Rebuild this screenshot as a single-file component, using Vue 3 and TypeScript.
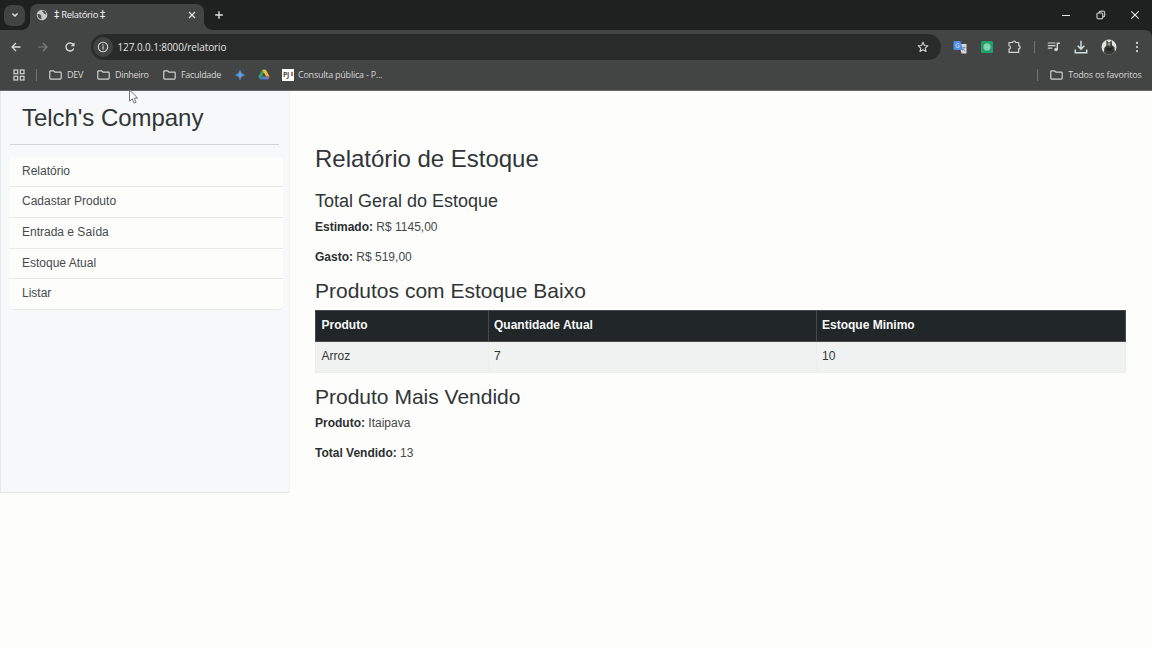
<script setup lang="ts">
interface Bookmark { label: string; cls: string }

const folders: Bookmark[] = [
  { label: 'DEV', cls: 'dev' },
  { label: 'Dinheiro', cls: 'money' },
  { label: 'Faculdade', cls: 'college' },
]
const links: string[] = ['Relatório', 'Cadastar Produto', 'Entrada e Saída', 'Estoque Atual', 'Listar']
const columns: string[] = ['Produto', 'Quantidade Atual', 'Estoque Minimo']
const lowStock: string[][] = [['Arroz', '7', '10']]
</script>

<template>
  <div class="window">
    <header class="chrome">
      <div class="tabstrip">
        <button class="tabsearch"><svg width="8" height="6" viewBox="0 0 8 6"><path d="M1.4 1.4 4 4l2.6-2.6" fill="none" stroke="#e3e3e3" stroke-width="1.4" /></svg></button>
        <div class="tab">
          <svg class="globe" width="12" height="12" viewBox="0 0 12 12"><circle cx="6" cy="6" r="5.3" fill="#c6c9c9" /><path d="M1.500 5.200c1.600-.4 2.800.2 3.600 1.300.5.8 0 1.400.2 2.200l.3 1.500C3.200 9.900 1.400 8.200 1.500 5.200zM6.300 1.500c-.4 1 .2 1.500 1 1.800.8.400.2 1.500 1.200 1.800l1.800.2C10.400 3.300 8.700 1.400 6.300 1.500z" fill="#4d4f4f" /></svg>
          <span class="tabtitle"><span class="dagger">‡</span> Relatório <span class="dagger">‡</span></span>
          <svg class="close" width="8" height="8" viewBox="0 0 8 8"><path d="m1 1 6 6M7 1 1 7" stroke="#e3e3e3" stroke-width="1.3" /></svg>
        </div>
        <svg class="newtab" width="10" height="10" viewBox="0 0 10 10"><path d="M5 1.200v7.600M1.200 5h7.600" stroke="#dedede" stroke-width="1.400" /></svg>
        <div class="controls">
          <svg width="10" height="10" viewBox="0 0 10 10"><path d="M1 5.500h8" stroke="#e8e8e8" /></svg>
          <svg width="10" height="10" viewBox="0 0 10 10" fill="none" stroke="#e8e8e8"><rect x="1" y="3" width="5.800" height="5.800" rx=".8" /><path d="M3.200 2.800V2q0-.8.8-.8h3.700q1 0 1 1v3.700q0 .8-.8.800H7" /></svg>
          <svg width="10" height="10" viewBox="0 0 10 10"><path d="m1.300 1.300 7.400 7.400m0-7.400L1.300 8.700" stroke="#e8e8e8" stroke-width="1.100" /></svg>
        </div>
      </div>

      <div class="toolbar">
        <div class="nav">
          <svg width="12" height="12" viewBox="0 0 12 12"><path d="M10.500 6H2M6 2 2 6l4 4" fill="none" stroke="#d8d8d8" stroke-width="1.300" /></svg>
          <svg width="12" height="12" viewBox="0 0 12 12"><path d="M1.500 6H10M6 2l4 4-4 4" fill="none" stroke="#808282" stroke-width="1.200" /></svg>
          <svg width="12" height="12" viewBox="0 0 12 12"><path d="M9.700 7.500A4 4 0 1 1 9 3.300L10 4.400" fill="none" stroke="#d8d8d8" stroke-width="1.400" /><path d="M10.500 1.200v4H6.600z" fill="#d8d8d8" /></svg>
        </div>
        <div class="address">
          <span class="info"><svg width="12" height="12" viewBox="0 0 12 12"><circle cx="6" cy="6" r="4.700" fill="none" stroke="#d4d6d6" stroke-width="1.100" /><path d="M6 5.300v3.200M6 3.300v1.200" stroke="#d4d6d6" stroke-width="1.200" /></svg></span>
          <span class="url">127.0.0.1:8000/relatorio</span>
          <svg class="star" width="12" height="12" viewBox="0 0 12 12"><path d="m6 1.300 1.400 3.200 3.400.3-2.600 2.300.8 3.400L6 8.700l-3 1.800.8-3.400-2.600-2.300 3.400-.3z" fill="none" stroke="#d3d5d5" stroke-width="1.100" stroke-linejoin="round" /></svg>
        </div>
        <div class="actions">
          <svg width="14" height="14" viewBox="0 0 14 14"><path d="M6 4h7.500v9.500H8.500z" fill="#d5d7da" /><path d="M9.300 7.500h3.400M11 6.500v1c0 1.500-.8 2.800-1.500 3.300M9.700 8.500c.5 1 1.300 1.800 2.500 2.300" fill="none" stroke="#818589" stroke-width=".8" /><path d="M1.500 1h6L10 10H2Q.500 10 .5 8.500V2q0-1 1-1z" fill="#528fe3" /><path d="M6.300 4.200a2 2 0 1 0 .1 2.600V5.900H4.800" fill="none" stroke="#bed8fb" stroke-width=".9" /></svg>
          <svg width="14" height="14" viewBox="0 0 14 14"><rect x="1" y="1" width="12" height="12" rx="1.500" fill="#20a16c" /><circle cx="7" cy="7" r="3.700" fill="#75c8a4" /><path d="M5 5.400 7 4l2.200 1.400v2.800L7 9.700 5 8.300zM5 5.500l4 2.700M9.200 5.500 5 8.200" fill="none" stroke="#a1ddc2" stroke-width=".7" /></svg>
          <svg width="14" height="14" viewBox="0 0 14 14"><path d="M2 2.500h3.700a1.500 1.500 0 0 1 3 0h3v3.200a1.500 1.500 0 0 1 0 3v3.600H2V9.200c2-.3 2-3.200 0-3.500z" fill="none" stroke="#d1d3d3" stroke-width="1.200" stroke-linejoin="round" /></svg>
          <i class="divider"></i>
          <svg class="queue" width="14" height="14" viewBox="0 0 14 14"><path d="M.8 3h7.700M.8 5.600h7.700M.8 8.200h4.500" stroke="#d1d3d3" stroke-width="1.200" /><path d="M10.300 9.500V3.300h2.600" fill="none" stroke="#d1d3d3" stroke-width="1.400" /><circle cx="9" cy="9.500" r="1.800" fill="#d1d3d3" /></svg>
          <svg width="14" height="14" viewBox="0 0 14 14"><path d="M7 .8v8M3.700 5.800 7 9.100l3.300-3.300M1.300 9.500v3.200h11.400V9.500" fill="none" stroke="#d0dcdf" stroke-width="1.500" /></svg>
          <svg width="16" height="16" viewBox="0 0 16 16"><circle cx="8" cy="8" r="7.500" fill="#e3e2df" /><path d="M5.500 1 7.300 3h1.800L10.500 1l.6 5.200 2.400 2 .3 4.600A7.500 7.500 0 0 1 3 13.500L3.300 9l2-2.300z" fill="#353935" /><path d="M6.800 3.200h2.600v3.500H6.500z" fill="#8d8d86" /><path d="m4.500 8.400 3.500.8 3.700-.8-1.600 3H6.200z" fill="#20251f" /></svg>
          <svg width="14" height="14" viewBox="0 0 14 14" fill="#d8dada"><circle cx="7" cy="2.900" r="1.100" /><circle cx="7" cy="7" r="1.100" /><circle cx="7" cy="11.100" r="1.100" /></svg>
        </div>
      </div>

      <div class="bookmarks">
        <svg class="grid" width="12" height="12" viewBox="0 0 12 12" fill="none" stroke="#d2d4d4" stroke-width="1.200"><rect x="1" y="1" width="3.700" height="3.700" /><rect x="7.300" y="1" width="3.700" height="3.700" /><rect x="1" y="7.300" width="3.700" height="3.700" /><rect x="7.300" y="7.300" width="3.700" height="3.700" /></svg>
        <i class="divider"></i>
        <div v-for="f in folders" :key="f.label" class="folder" :class="f.cls">
          <svg width="13" height="10" viewBox="0 0 13 10"><path d="M1.600.8h3L6 2.200h5.400q.8 0 .8.800v5.300q0 .8-.8.800H1.600q-.8 0-.8-.8V1.600q0-.8.8-.8z" fill="none" stroke="#cfd1d1" stroke-width="1.200" /></svg>
          <span>{{ f.label }}</span>
        </div>
        <svg class="gem" width="10" height="10" viewBox="0 0 10 10"><path d="M5 .3Q5.600 4.400 9.700 5 5.600 5.600 5 9.700 4.400 5.600.3 5 4.400 4.400 5 .3z" fill="#5e9fe4" stroke="#5e9fe4" stroke-width=".5" /></svg>
        <svg class="drive" width="12" height="11" viewBox="0 0 12 11"><path d="M4.200.8h3.600L4 7.200 2 10.400.4 7.600z" fill="#36a463" /><path d="M4.200.8h3.600l3.800 6.800H8z" fill="#edbb35" /><path d="M4 7.300h7.600L10 10.400H2z" fill="#477fd8" /><path d="M8.200 7.300h3.400L10 10.400z" fill="#dc6846" /><path d="M6 4.200 4.200 7.300h3.600z" fill="#474949" /></svg>
        <span class="favicon"><b>PJ</b><i></i></span>
        <span class="consulta">Consulta pública - P...</span>
        <div class="allfav">
          <i class="divider"></i>
          <svg width="13" height="10" viewBox="0 0 13 10"><path d="M1.600.8h3L6 2.200h5.400q.8 0 .8.800v5.300q0 .8-.8.800H1.600q-.8 0-.8-.8V1.600q0-.8.8-.8z" fill="none" stroke="#cfd1d1" stroke-width="1.200" /></svg>
          <span>Todos os favoritos</span>
        </div>
      </div>
    </header>

    <div class="page">
      <aside class="sidebar">
        <h2>Telch's Company</h2>
        <hr />
        <ul>
          <li v-for="l in links" :key="l"><a>{{ l }}</a></li>
        </ul>
      </aside>
      <main>
        <h2>Relatório de Estoque</h2>
        <h4>Total Geral do Estoque</h4>
        <p><strong>Estimado:</strong> R$ 1145,00</p>
        <p><strong>Gasto:</strong> R$ 519,00</p>
        <h3>Produtos com Estoque Baixo</h3>
        <table>
          <colgroup><col class="c1" /><col class="c2" /><col /></colgroup>
          <thead><tr><th v-for="c in columns" :key="c">{{ c }}</th></tr></thead>
          <tbody><tr v-for="r in lowStock" :key="r[0]"><td v-for="v in r" :key="v">{{ v }}</td></tr></tbody>
        </table>
        <h3 class="best">Produto Mais Vendido</h3>
        <p><strong>Produto:</strong> Itaipava</p>
        <p><strong>Total Vendido:</strong> 13</p>
      </main>
    </div>
    <svg class="cursor" width="11" height="16" viewBox="0 0 11 16"><path d="M1.500 1v11.200l2.700-2.300 1.900 4.200 2-.9-1.900-4.100h3.500z" fill="#fff" stroke="#727476" stroke-width="1" /></svg>
  </div>
</template>

<style>
body { margin: 0; background: #fdfdfc; }
</style>

<style scoped>
* { box-sizing: border-box; }
svg { display: block; flex: none; }
.window { position: relative; width: 1152px; height: 648px; overflow: hidden; background: #fdfdfc; font-family: "Liberation Sans", Arial, sans-serif; color: #303637; }
.chrome { height: 91px; background: #434444; font-family: "Open Sans", "Noto Sans", sans-serif; color: #dedfdf; font-size: 9.500px; border-bottom: 1px solid #6b6867; }
.tabstrip { height: 30px; display: flex; align-items: center; background: #1f2121; }
.tabsearch { width: 21px; height: 21px; margin-left: 4px; padding: 0; border: 0; border-radius: 7px; background: #414343; display: flex; align-items: center; justify-content: center; }
.tab { position: relative; width: 174px; height: 26px; margin: 4px 0 0 5px; padding: 0 8px 4px 6px; display: flex; align-items: center; background: #434444; border-radius: 8px 8px 0 0; }
.tab::before, .tab::after { content: ""; position: absolute; bottom: 0; width: 8px; height: 8px; }
.tab::before { left: -8px; background: radial-gradient(circle at 0 0, transparent 7.500px, #434444 8px); }
.tab::after { right: -8px; background: radial-gradient(circle at 100% 0, transparent 7.500px, #434444 8px); }
.tabtitle { margin-left: 6px; letter-spacing: -.37px; line-height: 14px; white-space: nowrap; color: #eee; font-weight: 500; }
.dagger { font-family: "DejaVu Sans", sans-serif; font-size: 10.500px; line-height: 10px; letter-spacing: 0; }
.close { margin-left: auto; }
.newtab { margin-left: 10px; }
.controls { display: flex; gap: 24.500px; margin-left: auto; margin-right: 12px; }
.toolbar { height: 34px; display: flex; align-items: center; border-radius: 0 7px 0 0; background: #434444; box-shadow: 8px -8px 0 #1f2121; clip-path: inset(0); }
.nav { display: flex; gap: 15px; margin-left: 10px; }
.address { width: 850px; height: 26px; margin-left: 15px; display: flex; align-items: center; border-radius: 13px; background: #292b2b; padding: 0 12px 0 2px; }
.info { width: 20px; height: 20px; border-radius: 50%; background: #414343; display: flex; align-items: center; justify-content: center; }
.url { margin-left: 4.500px; font-size: 10px; letter-spacing: -.1px; color: #e3e4e4; }
.star { margin-left: auto; }
.actions { display: flex; align-items: center; gap: 13px; margin-left: 12px; }
.divider { display: block; width: 1px; height: 12px; background: #717373; flex: none; }
.actions .divider { margin: 0 -1px 0 0; }
.bookmarks { height: 26px; padding-bottom: 5px; display: flex; align-items: center; padding-left: 13px; white-space: nowrap; font-size: 9px; color: #d5d7d7; }
.bookmarks > .divider { margin: 0 12px 0 11px; }
.folder, .allfav { display: flex; align-items: center; gap: 5px; letter-spacing: -.32px; }
.dev { width: 48px; }
.money { width: 66px; }
.college { width: 72px; }
.drive { margin-left: 13px; }
.favicon { margin-left: 12px; width: 12px; height: 12px; background: #fff; color: #4b4c4c; font-size: 7px; line-height: 11px; display: flex; letter-spacing: -.4px; padding: 0 1px; }
.favicon i { width: 2px; height: 4px; margin: 3px 0 0 auto; background: #cf6d4a; }
.consulta { margin-left: 4px; letter-spacing: -.24px; }
.allfav { margin-left: auto; margin-right: 10.500px; letter-spacing: -.2px; }
.allfav .divider { margin-right: 7px; }
.page { display: flex; align-items: flex-start; }
.sidebar { width: 290px; height: 402px; padding: 12px 6px 0 9px; background: #f7f8f9; border: 1px solid #e4e8e9; border-top: 0; border-right-color: #f3f5f5; }
h2, h3, h4, p, ul { margin: 0; font-weight: 400; }
h2 { font-size: 24px; line-height: 29px; letter-spacing: -.02px; }
.sidebar h2 { padding-left: 12px; letter-spacing: -.04px; }
hr { height: 1px; border: 0; background: #d2d5d4; margin: 12px 4px 12px 0; }
ul { padding: 0; list-style: none; }
li { height: 30.750px; padding: 5px 12px 0; border-bottom: 1px solid #e8eaea; background: #fdfdfc; font-size: 12px; line-height: 18px; color: #464b4c; }
li:first-child { border-radius: 4px 4px 0 0; height: 30px; }
li:last-child { border-radius: 0 0 4px 4px; }
main { width: 811px; margin-left: 25px; padding-top: 53px; font-size: 12px; line-height: 18px; color: #44494a; }
h4 { font-size: 18px; line-height: 22px; margin: 17px 0 6px; }
h3 { font-size: 21px; line-height: 25px; margin-bottom: 7px; }
.best { margin-bottom: 5px; }
main h2, h3, h4 { color: #303637; }
p { margin-bottom: 12px; }
strong { color: #2b3031; }
table { width: 811px; border-collapse: collapse; table-layout: fixed; margin-bottom: 11px; }
.c1 { width: 172.500px; }
.c2 { width: 328px; }
th, td { height: 31px; padding: 0 6px 2px 5.500px; text-align: left; color: #303637; }
th { background: #212628; color: #f8f9f9; border: 1px solid #454b4d; }
td { background: #f0f1f1; border: 1px solid #eceeee; border-top: 0; }
.cursor { position: absolute; left: 128px; top: 89px; }
</style>
